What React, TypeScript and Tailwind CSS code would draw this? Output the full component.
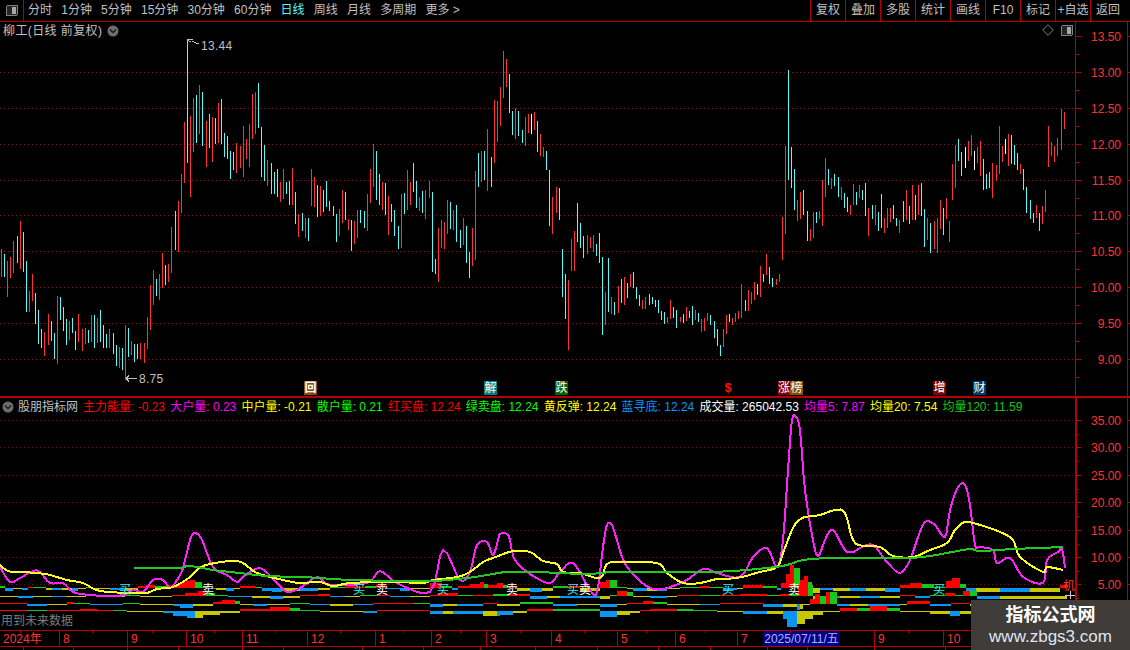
import React from "react";

const BARS = `1 249 277 r;4 254 277 c;7 261 297 r;10 257 278 r;13 241 273 r;17 236 263 c;20 221 269 r;23 232 272 c;26 261 312 c;29 291 312 r;32 274 301 r;35 293 324 c;38 310 344 c;41 329 348 c;44 332 356 r;48 314 345 r;51 321 341 c;54 333 359 c;57 296 364 r;60 297 320 c;63 307 331 c;66 319 345 c;69 321 340 r;72 318 333 c;75 331 350 c;78 314 342 r;82 329 351 r;85 328 344 r;88 330 343 c;91 315 342 r;94 315 348 c;97 318 343 r;100 310 342 c;103 325 348 c;106 334 348 c;109 329 348 r;113 333 354 c;116 345 366 c;119 347 368 r;122 348 370 c;125 325 380 r;128 328 357 c;131 341 355 r;134 344 362 c;137 344 359 c;140 343 359 r;144 343 363 r;147 317 349 r;150 285 330 r;153 270 305 r;156 279 296 c;159 274 300 r;162 253 288 r;165 265 285 c;168 264 282 r;171 227 273 r;175 211 250 c;178 201 252 r;181 174 213 r;184 122 183 r;187 39 163 c;190 116 197 r;193 98 152 r;196 95 143 c;199 85 134 r;202 92 146 c;206 121 167 r;209 114 148 c;212 117 162 r;215 118 144 c;218 103 143 r;221 99 144 c;224 133 157 c;227 136 159 c;230 151 179 c;233 152 170 c;236 143 173 r;240 146 168 r;243 126 177 r;246 139 159 r;249 124 167 r;252 94 139 r;255 92 134 r;258 83 128 c;261 127 177 c;264 145 181 c;267 160 186 r;271 163 194 c;274 172 194 c;277 169 197 c;280 182 202 r;283 169 199 r;286 182 194 c;289 181 205 c;292 168 205 r;295 192 224 c;298 214 237 r;302 213 231 c;305 218 238 r;308 218 241 c;311 169 206 r;314 177 207 r;317 185 217 c;320 186 216 r;323 190 212 c;326 181 207 c;329 201 211 c;333 206 216 c;336 214 242 c;339 209 236 r;342 190 223 r;345 192 220 c;348 219 230 r;351 220 251 c;354 221 244 r;357 210 238 r;360 210 223 c;364 211 228 c;367 194 231 r;370 169 203 r;373 144 187 r;376 151 200 c;379 174 205 c;382 182 210 r;385 183 215 c;388 196 235 r;391 204 222 c;394 210 236 c;398 226 249 c;401 194 248 r;404 193 214 c;407 170 210 r;410 182 205 r;413 163 192 c;416 181 208 c;419 197 211 r;422 191 213 c;425 190 219 r;429 181 198 r;432 192 272 c;435 259 274 c;438 228 282 r;441 220 248 r;444 222 249 r;447 200 234 r;450 202 229 c;453 210 230 r;456 205 242 c;460 230 248 c;463 218 245 r;466 226 263 c;469 252 278 c;472 228 266 r;475 171 260 r;478 153 187 c;481 151 182 r;484 151 180 c;487 129 191 r;491 157 187 c;494 100 163 r;497 101 142 r;500 87 126 r;503 51 98 r;506 59 87 r;509 74 113 c;512 111 135 c;515 108 139 r;518 111 136 c;522 130 143 c;525 117 146 r;528 114 133 r;531 114 134 w;534 112 130 r;537 121 152 c;540 134 156 r;543 147 157 r;546 151 170 c;549 170 226 c;552 197 234 r;556 187 213 r;559 188 220 c;562 249 297 c;565 274 319 c;568 280 350 r;571 239 271 r;574 231 271 r;577 203 242 c;580 223 248 c;583 236 258 c;587 235 254 r;590 237 248 r;593 235 252 r;596 244 256 c;599 233 263 c;602 257 335 c;605 292 325 r;608 258 312 c;611 297 314 r;614 302 315 c;618 286 313 r;621 279 303 c;624 277 305 r;627 283 298 c;630 274 287 r;633 272 288 c;636 287 299 c;639 295 306 c;642 300 309 r;645 297 309 r;649 294 305 c;652 297 304 c;655 300 307 c;658 300 313 c;661 311 320 c;664 312 324 c;667 317 323 r;670 300 319 r;673 307 318 c;676 310 328 c;680 317 322 r;683 314 323 c;686 307 321 r;689 311 318 c;692 306 325 c;695 310 320 r;698 313 322 c;701 319 332 r;704 318 331 r;707 313 321 r;710 315 325 c;714 321 338 c;717 329 346 c;720 345 356 c;723 329 347 r;726 315 334 r;729 314 322 c;732 318 325 r;735 313 322 r;738 311 319 r;741 284 318 r;745 300 311 c;748 290 311 r;751 292 304 r;754 282 300 r;757 284 295 c;760 266 297 r;763 274 282 c;766 254 275 r;769 267 284 c;772 278 287 c;776 279 285 r;779 274 282 r;782 217 260 r;785 146 234 r;788 70 180 c;791 147 188 c;794 169 210 c;797 200 221 r;800 192 219 r;803 190 215 c;807 211 241 c;810 229 241 r;813 212 238 r;816 212 223 c;819 211 219 r;822 180 226 r;825 158 197 r;828 169 185 c;831 178 189 r;834 174 186 c;838 177 197 c;841 187 200 r;844 193 208 c;847 197 212 c;850 205 215 r;853 184 205 r;856 192 205 c;859 185 198 r;862 190 200 c;865 183 216 c;868 208 236 r;872 205 219 c;875 205 225 r;878 212 231 c;881 194 228 c;884 218 233 r;887 208 228 r;890 208 222 r;893 205 219 c;896 218 226 c;899 220 233 r;903 201 222 c;906 190 220 r;909 206 224 c;912 185 220 r;915 195 220 c;918 185 215 r;921 183 216 c;924 209 247 c;927 218 240 r;930 223 253 c;934 221 249 r;937 218 253 r;940 200 229 r;943 208 235 c;946 198 219 r;949 221 242 r;952 164 200 r;955 145 188 r;958 139 161 c;961 152 176 c;965 147 168 w;968 141 161 r;971 135 156 r;974 151 170 w;977 147 163 r;980 141 176 r;983 159 190 c;986 174 189 c;989 172 188 c;992 163 198 r;996 165 181 r;999 126 174 r;1002 146 162 r;1005 139 154 w;1008 134 166 r;1011 135 164 c;1014 145 165 c;1017 153 170 c;1020 164 174 r;1023 169 190 c;1026 187 213 c;1030 200 219 c;1033 213 223 c;1036 205 218 r;1039 213 231 c;1042 206 224 r;1045 190 212 r;1048 126 167 r;1051 142 156 r;1054 146 162 r;1057 138 156 r;1061 109 150 r;1064 112 129 r`;

const BAR_COLORS: Record<string, string> = { r: "#ff3232", c: "#54fcfc", w: "#ffffff" };
const HIST_COLORS: Record<string, string> = { r: "#ff0000", g: "#18c818", b: "#0a96f0", y: "#c8c800" };

const MAIN_GRID = [72, 108, 144, 180, 215, 251, 287, 323, 359];
const MAIN_AXIS = [
  ["13.50", 36], ["13.00", 72], ["12.50", 108], ["12.00", 144], ["11.50", 180],
  ["11.00", 215], ["10.50", 251], ["10.00", 287], ["9.50", 323], ["9.00", 359],
] as const;
const SUB_AXIS = [
  ["35.00", 420], ["30.00", 447], ["25.00", 475], ["20.00", 502],
  ["15.00", 530], ["10.00", 557], ["5.00", 584],
] as const;

const MAGENTA = "0,567 10,582 20,578 33,571 40,572 50,583 63,583 73,592 90,595 120,596 133,590 143,592 153,580 163,580 170,588 177,580 183,568 190,540 195,533 202,540 213,567 227,575 237,582 243,577 260,568 277,583 287,592 300,588 317,577 330,585 367,583 380,571 397,583 430,592 443,550 460,580 470,572 477,545 487,542 493,555 498,540 500,534 507,534 510,540 517,563 547,583 560,572 573,563 590,590 597,592 603,547 607,525 612,525 617,540 627,567 653,589 683,582 703,569 717,573 740,577 753,557 767,548 777,567 783,540 788,470 792,420 796,417 800,430 805,490 813,540 818,556 825,540 830,531 835,532 845,550 853,552 860,548 873,545 887,562 900,573 910,560 917,540 925,522 935,525 945,537 950,510 958,487 965,485 970,505 975,545 980,547 993,550 997,563 1010,558 1023,577 1043,583 1047,560 1058,552 1062,549 1065,568";
const YELLOW = "0,565 8,571 20,572 37,573 50,575 67,580 83,583 100,591 133,593 147,593 157,589 173,587 190,577 203,566 230,561 243,563 257,573 283,580 300,583 320,582 333,586 350,583 383,582 400,582 423,583 433,580 457,577 470,572 483,562 493,558 513,551 530,552 543,561 557,564 563,572 580,573 600,578 607,564 620,562 657,563 667,573 683,583 700,583 717,579 737,578 760,572 777,567 783,553 788,540 792,530 797,522 805,517 820,515 835,510 845,513 853,540 863,546 880,547 893,556 913,557 930,550 947,543 955,530 965,522 980,525 1000,532 1013,540 1020,557 1043,572 1047,567 1063,570";
const GREEN = "134,568 177,568 190,566 213,570 240,573 267,576 300,577 320,578 350,580 400,581 433,581 467,578 487,575 507,572 533,572 560,573 587,574 613,572 640,572 700,572 733,571 767,568 787,565 803,560 830,558 863,558 907,558 930,556 947,553 970,549 980,551 1013,549 1063,547";

// catmull-rom sampling so the averages read as curves, not straight runs
const smooth = (raw: string) => {
  const p = raw.split(" ").map((s) => s.split(",").map(Number));
  const out: string[] = [];
  for (let i = 0; i < p.length - 1; i++) {
    const a = p[Math.max(i - 1, 0)];
    const b = p[i];
    const c = p[i + 1];
    const d = p[Math.min(i + 2, p.length - 1)];
    for (let k = 0; k < 4; k++) {
      const t = k / 4;
      const f = (n: number) =>
        0.5 * (2 * b[n] + (c[n] - a[n]) * t + (2 * a[n] - 5 * b[n] + 4 * c[n] - d[n]) * t * t + (3 * b[n] - a[n] - 3 * c[n] + d[n]) * t * t * t);
      out.push(f(0).toFixed(1) + "," + f(1).toFixed(1));
    }
  }
  out.push(p[p.length - 1].join(","));
  return out.join(" ");
};

// [x end, signed height, colour]
type Seg = [number, number, string];
const HIST_ROWS: { base: number; segs: Seg[] }[] = [
  {
    base: 588,
    segs: [[5,2,"g"],[13,-3,"b"],[22,-1,"y"],[28,-2,"b"],[34,1,"r"],[46,1,"g"],[52,-2,"y"],[62,-2,"b"],[72,-2,"y"],[78,-3,"b"],[86,-1,"y"],[92,1,"g"],[110,-1,"y"],[125,-2,"b"],[138,-2,"y"],[146,2,"r"],[155,3,"r"],[170,2,"g"],[178,3,"r"],[182,5,"r"],[186,6,"r"],[190,7,"r"],[195,8,"r"],[202,6,"g"],[208,1,"g"],[216,-1,"b"],[226,-2,"y"],[234,-3,"b"],[240,-1,"y"],[255,2,"r"],[262,1,"g"],[272,-3,"b"],[282,-4,"b"],[300,-3,"y"],[318,-3,"b"],[330,-2,"y"],[345,1,"g"],[355,2,"r"],[365,1,"r"],[376,2,"g"],[385,3,"r"],[400,-1,"b"],[410,-3,"b"],[430,-1,"y"],[442,5,"r"],[452,2,"g"],[458,-2,"b"],[470,2,"r"],[480,4,"r"],[484,6,"r"],[488,4,"g"],[497,3,"r"],[503,5,"r"],[508,3,"g"],[517,1,"r"],[530,-3,"y"],[542,-4,"b"],[553,-3,"y"],[568,2,"g"],[580,2,"r"],[600,-3,"y"],[606,6,"r"],[610,8,"r"],[617,8,"g"],[627,1,"g"],[633,-1,"y"],[647,-3,"b"],[657,-3,"y"],[667,-3,"b"],[680,-1,"y"],[700,1,"g"],[710,2,"r"],[723,1,"g"],[737,-2,"b"],[743,-1,"y"],[763,3,"r"],[777,2,"g"],[781,-2,"b"],[786,5,"r"],[790,14,"r"],[794,23,"r"],[800,20,"g"],[804,8,"r"],[808,12,"r"],[812,6,"g"],[820,-5,"y"],[833,-2,"b"],[850,-3,"y"],[866,-3,"b"],[885,-3,"y"],[900,-4,"b"],[910,3,"r"],[922,5,"r"],[934,4,"g"],[946,1,"g"],[952,7,"r"],[960,10,"r"],[966,4,"g"],[976,-3,"b"],[1000,-4,"y"],[1030,-4,"b"],[1060,-4,"y"],[1068,3,"r"]],
  },
  {
    base: 596,
    segs: [[18,-1,"y"],[33,-2,"b"],[52,-1,"y"],[66,-1,"b"],[86,-1,"y"],[105,1,"r"],[125,-1,"y"],[140,1,"g"],[172,-1,"y"],[185,1,"r"],[198,3,"r"],[206,5,"r"],[215,3,"g"],[228,1,"g"],[252,-1,"b"],[270,-2,"y"],[283,-3,"b"],[300,-2,"y"],[318,1,"r"],[330,2,"r"],[345,-1,"b"],[360,-1,"y"],[378,1,"g"],[390,1,"r"],[410,-1,"b"],[430,-1,"y"],[438,1,"r"],[458,3,"r"],[473,1,"g"],[493,1,"r"],[510,2,"g"],[530,2,"r"],[547,-3,"b"],[560,-2,"y"],[600,-2,"b"],[610,-3,"y"],[617,1,"g"],[627,5,"r"],[633,4,"g"],[650,-1,"y"],[667,-2,"b"],[677,-1,"y"],[700,1,"r"],[720,1,"g"],[740,1,"r"],[767,2,"r"],[780,1,"g"],[790,2,"r"],[798,2,"g"],[808,11,"r"],[813,11,"g"],[822,-4,"y"],[840,-2,"b"],[860,-2,"y"],[880,-2,"b"],[900,-2,"y"],[915,1,"r"],[930,-2,"b"],[945,1,"g"],[955,3,"r"],[963,1,"g"],[970,5,"r"],[977,5,"g"],[1000,-3,"b"],[1067,-3,"y"]],
  },
  {
    base: 604,
    segs: [[27,1,"r"],[47,-2,"b"],[67,-1,"y"],[73,2,"r"],[90,1,"g"],[123,-1,"b"],[140,1,"g"],[173,-1,"y"],[180,-2,"b"],[193,-4,"b"],[213,-2,"y"],[222,2,"r"],[235,4,"r"],[240,3,"g"],[253,-1,"y"],[267,-2,"b"],[290,-1,"y"],[310,1,"g"],[330,-1,"b"],[353,-2,"y"],[373,-1,"b"],[413,1,"r"],[430,1,"g"],[443,-3,"b"],[457,-2,"y"],[483,-2,"b"],[497,1,"r"],[520,-2,"y"],[553,2,"g"],[577,-2,"b"],[600,-1,"y"],[617,-3,"b"],[627,-1,"y"],[643,1,"r"],[653,3,"r"],[667,2,"g"],[700,-1,"y"],[720,-1,"b"],[763,1,"r"],[783,-3,"b"],[797,-3,"y"],[800,-6,"b"],[803,-5,"y"],[810,-1,"y"],[815,5,"r"],[820,10,"r"],[826,8,"g"],[830,12,"r"],[837,12,"g"],[850,-2,"b"],[868,-2,"y"],[900,-2,"b"],[907,-1,"y"],[930,3,"r"],[951,-2,"b"],[970,1,"r"],[1067,-2,"y"]],
  },
  {
    base: 611,
    segs: [[27,1,"r"],[47,1,"g"],[80,1,"r"],[97,2,"r"],[113,1,"r"],[127,1,"g"],[163,-1,"y"],[173,-2,"b"],[187,-5,"b"],[195,-7,"b"],[203,-7,"y"],[220,-4,"y"],[240,-2,"y"],[270,2,"r"],[290,4,"r"],[300,3,"g"],[320,1,"g"],[363,-1,"y"],[377,-2,"b"],[430,1,"r"],[443,-3,"b"],[453,-3,"y"],[483,-3,"b"],[497,-5,"y"],[500,-5,"b"],[513,-4,"b"],[527,-2,"y"],[553,2,"r"],[600,2,"g"],[617,-6,"b"],[630,-4,"y"],[640,-2,"y"],[650,1,"r"],[677,2,"r"],[693,2,"g"],[717,1,"g"],[743,-1,"y"],[767,-3,"b"],[783,-3,"y"],[787,-8,"b"],[797,-16,"b"],[805,-13,"y"],[813,-8,"y"],[823,-4,"y"],[840,-1,"y"],[857,3,"r"],[870,3,"g"],[887,5,"r"],[900,3,"g"],[930,-1,"y"],[950,-3,"y"],[960,-5,"b"],[972,-3,"y"],[1067,-2,"b"]],
  },
];

const TRADE_MARKS = [
  ["买", 125], ["卖", 208], ["买", 359], ["卖", 382], ["买", 443], ["卖", 512],
  ["买", 573], ["卖", 585], ["买", 728], ["卖", 794], ["买", 939],
] as const;

const STATS = [
  ["主力能量: -0.23", "text-[#ff0000]"],
  ["大户量: 0.23", "text-[#ff00ff]"],
  ["中户量: -0.21", "text-[#ffff00]"],
  ["散户量: 0.21", "text-[#00ff00]"],
  ["红买盘: 12.24", "text-[#ff0000]"],
  ["绿卖盘: 12.24", "text-[#00ff00]"],
  ["黄反弹: 12.24", "text-[#ffff00]"],
  ["蓝寻底: 12.24", "text-[#0a96ff]"],
  ["成交量: 265042.53", "text-white"],
  ["均量5: 7.87", "text-[#ff00ff]"],
  ["均量20: 7.54", "text-[#ffff00]"],
  ["均量120: 11.59", "text-[#18c818]"],
];

const PERIODS = ["分时", "1分钟", "5分钟", "15分钟", "30分钟", "60分钟", "日线", "周线", "月线", "多周期", "更多 >"];
const TOOLS = ["复权", "叠加", "多股", "统计", "画线", "F10", "标记", "+自选"];

const MONTHS = [
  ["2024年", "w-[59px]"], ["8", "w-[68px]"], ["9", "w-[59px]"], ["10", "w-[56px]"], ["11", "w-[65px]"],
  ["12", "w-[68px]"], ["1", "w-[56px]"], ["2", "w-[55px]"], ["3", "w-[65px]"], ["4", "w-[66px]"],
  ["5", "w-[58px]"], ["6", "w-[62px]"], ["7", "w-[26px]"],
];

// short marks hanging from the two rules of the time axis
const TOP_TICKS = [20, 92, 152, 214, 275, 340, 403, 460, 520, 584, 646, 705, 790, 908, 975, 1040];
const LOW_TICKS = [23, 73, 127, 178, 242, 283, 362, 423, 480, 535, 597, 658, 710, 767, 807, 874, 945];

const Candles = () => (
  <g>
    {BARS.split(";").map((row) => {
      const [x, top, bottom, c] = row.split(" ");
      return <rect key={x} x={x} y={top} width={1} height={+bottom - +top} fill={BAR_COLORS[c]} />;
    })}
  </g>
);

const Histogram = () => (
  <g>
    {HIST_ROWS.map((row) => {
      let left = 0;
      return row.segs.map(([end, h, c], i) => {
        const x = left;
        left = end;
        return (
          <rect
            key={row.base + "-" + i}
            x={x}
            y={h > 0 ? row.base - h : row.base}
            width={end - x}
            height={Math.abs(h)}
            fill={HIST_COLORS[c]}
          />
        );
      });
    })}
  </g>
);

const ChevronDot = () => (
  <svg viewBox="0 0 12 12" className="w-3 h-3">
    <circle cx="6" cy="6" r="5.5" fill="#6e6e6e" />
    <path d="M3 4.5 L6 7.5 L9 4.5" fill="none" stroke="#1a1a1a" strokeWidth="1.4" />
  </svg>
);

const PanelIcon = () => (
  <svg viewBox="0 0 12 11" className="w-3 h-[11px]" shapeRendering="crispEdges">
    <rect x="0.5" y="0.5" width="11" height="10" rx="1.5" fill="#262626" stroke="#808080" />
    <rect x="6" y="2" width="4" height="7" fill="#a8a8a8" />
  </svg>
);

const Badge = ({ text, cls }: { text: string; cls: string }) => (
  <div className={"absolute top-[359px] h-[14px] flex items-center justify-center text-white text-[12px] leading-none " + cls}>
    {text}
  </div>
);

export default function App() {
  return (
    <div className="relative w-[1130px] h-[650px] overflow-hidden bg-black flex flex-col font-['Liberation_Sans','Noto_Sans_CJK_SC',sans-serif] text-[12px] leading-none text-[#c0c0c0]">
      {/* top toolbar */}
      <div className="h-[22px] flex shrink-0 items-stretch border-b border-[#b40000]">
        <div className="w-[24px] flex items-center justify-center border-r border-[#b40000]">
          <PanelIcon />
        </div>
        <div className="flex items-center gap-[9.2px] pl-[4px] pb-[2px] whitespace-nowrap">
          {PERIODS.map((p) => (
            <span key={p} className={p === "日线" ? "text-[#54fcfc]" : ""}>
              {p}
            </span>
          ))}
        </div>
        <div className="ml-auto flex">
          {TOOLS.map((t) => (
            <div key={t} className="w-[35px] flex items-center justify-center pb-[2px] border-l border-[#b40000] whitespace-nowrap">
              {t}
            </div>
          ))}
          <div className="w-[40px] flex items-center pl-[5px] pb-[2px] border-l border-[#b40000]">返回</div>
        </div>
      </div>

      {/* price panel */}
      <div className="relative h-[374px] shrink-0">
        <svg viewBox="0 22 1130 374" className="block w-[1130px] h-[374px]" shapeRendering="crispEdges">
          {MAIN_GRID.map((y) => (
            <line key={y} x1="0" x2="1075" y1={y + 0.5} y2={y + 0.5} stroke="#901010" strokeDasharray="1 3" />
          ))}
          <Candles />
          <path d="M187.5 39 h5 M187.5 40 l3 2 M192 41 l4 2 h3" stroke="#c0c0c0" fill="none" />
          <text x="201" y="50" fill="#c0c0c0" fontSize="12" letterSpacing="0.3">13.44</text>
          <path d="M126 378.5 h11 M126 378.5 l3 -3 M126 378.5 l3 3" stroke="#c0c0c0" fill="none" />
          <text x="139" y="383" fill="#c0c0c0" fontSize="12" letterSpacing="0.3">8.75</text>
          <line x1="1075.5" x2="1075.5" y1="22" y2="396" stroke="#b40000" />
          <line x1="1127.5" x2="1127.5" y1="22" y2="396" stroke="#b40000" />
          {MAIN_AXIS.map(([label, y]) => (
            <g key={label}>
              <line x1="1076" x2="1081" y1={y + 0.5} y2={y + 0.5} stroke="#b40000" />
              <line x1="1076" x2="1079" y1={y + 18.5} y2={y + 18.5} stroke="#b40000" />
              <line x1="1128" x2="1130" y1={y + 0.5} y2={y + 0.5} stroke="#b40000" />
              <text x="1121" y={y + 5} textAnchor="end" fill="#ff3232" fontSize="12" shapeRendering="auto">{label}</text>
            </g>
          ))}
        </svg>
        <div className="absolute left-[3px] top-[2px] h-[14px] flex items-center gap-[5px] whitespace-nowrap">
          <span className="text-[12px] tracking-[0.4px]">柳工(日线 前复权)</span>
          <ChevronDot />
        </div>
        <div className="absolute left-[1042px] top-[2px] flex items-center gap-[7px]">
          <svg viewBox="0 0 12 12" className="w-3 h-3">
            <path d="M6 0.7 L11.3 6 L6 11.3 L0.7 6 Z" fill="none" stroke="#808080" />
          </svg>
          <PanelIcon />
        </div>
        <Badge text="回" cls="left-[304px] w-[13px] bg-[#8a4a10] font-bold" />
        <Badge text="解" cls="left-[484px] w-[13px] bg-[#007f7f]" />
        <Badge text="跌" cls="left-[555px] w-[13px] bg-[#006400]" />
        <Badge text="$" cls="left-[725px] w-[6px] font-bold !text-[#ff1010]" />
        <Badge text="涨" cls="left-[778px] w-[12px] bg-[#800000]" />
        <Badge text="榜" cls="left-[790px] w-[13px] bg-[#8a5000]" />
        <Badge text="增" cls="left-[933px] w-[13px] bg-[#800000]" />
        <Badge text="财" cls="left-[973px] w-[13px] bg-[#003c6e]" />
      </div>

      {/* indicator panel */}
      <div className="relative h-[234px] shrink-0 border-t-2 border-[#b40000]">
        <svg viewBox="0 398 1130 232" className="block w-[1130px] h-[232px]" shapeRendering="crispEdges">
          {SUB_AXIS.map(([label, y]) => (
            <line key={label} x1="0" x2="1075" y1={y + 0.5} y2={y + 0.5} stroke="#6a1010" strokeDasharray="1 3" />
          ))}
          <Histogram />
          <polyline points={smooth(MAGENTA)} fill="none" stroke="#ff20ff" strokeWidth="2" />
          <polyline points={smooth(YELLOW)} fill="none" stroke="#ffff20" strokeWidth="2" />
          <polyline points={smooth(GREEN)} fill="none" stroke="#20c820" strokeWidth="2" />
          {TRADE_MARKS.map(([t, x]) => (
            <text key={x} x={x} y="594" textAnchor="middle" fontSize="12" fill={t === "买" ? "#30f0f0" : "#ffffff"} shapeRendering="auto">
              {t}
            </text>
          ))}
          <text x="1069" y="590" textAnchor="middle" fontSize="12" fill="#ff3232" shapeRendering="auto">机</text>
          <path d="M1065 595.5 h10 M1070.5 591 v8" stroke="#e0c0e0" />
          <line x1="1075.5" x2="1075.5" y1="398" y2="630" stroke="#b40000" strokeWidth="2" />
          <line x1="1127.5" x2="1127.5" y1="398" y2="630" stroke="#b40000" />
          {SUB_AXIS.map(([label, y]) => (
            <g key={label}>
              <line x1="1076" x2="1081" y1={y + 0.5} y2={y + 0.5} stroke="#b40000" />
              <line x1="1076" x2="1079" y1={y + 14.5} y2={y + 14.5} stroke="#b40000" />
              <line x1="1128" x2="1130" y1={y + 0.5} y2={y + 0.5} stroke="#b40000" />
              <text x="1121" y={y + 5} textAnchor="end" fill="#ff3232" fontSize="12" shapeRendering="auto">{label}</text>
            </g>
          ))}
        </svg>
        <div className="absolute left-[2px] top-[2px] h-[14px] flex items-center gap-[4px] whitespace-nowrap">
          <ChevronDot />
          <span className="mr-[1px] text-[#c0c0c0]">股朋指标网</span>
          <div className="flex gap-[5.2px]">
            {STATS.map(([text, cls]) => (
              <span key={text} className={cls}>
                {text}
              </span>
            ))}
          </div>
        </div>
        <div className="absolute left-[1px] top-[217px] text-[#7c7c7c]">用到未来数据</div>
      </div>

      {/* time axis */}
      <div className="relative h-[20px] shrink-0">
        <div className="h-[17px] flex border-y border-[#b40000] text-[#ff3232] whitespace-nowrap">
          {MONTHS.map(([label, w]) => (
            <div key={label} className={"pl-[3px] pt-[1px] flex items-center border-l border-[#b40000] first:border-l-0 " + w}>
              {label}
            </div>
          ))}
          <div className="w-[77px] flex items-center justify-center bg-[#000088] text-[#b0b0ff]">2025/07/11/五</div>
          <div className="w-[34px]" />
          <div className="w-[69px] pl-[3px] pt-[1px] flex items-center border-l border-[#b40000]">9</div>
          <div className="w-[28px] pl-[3px] pt-[1px] flex items-center border-l border-[#b40000]">10</div>
        </div>
        <svg viewBox="0 0 1075 20" className="absolute left-0 top-0 w-[1075px] h-[20px]" shapeRendering="crispEdges">
          {TOP_TICKS.map((x) => (
            <line key={x} x1={x + 0.5} x2={x + 0.5} y1="1" y2="3" stroke="#b40000" />
          ))}
          {LOW_TICKS.map((x) => (
            <line key={x} x1={x + 0.5} x2={x + 0.5} y1="17" y2="20" stroke="#b40000" />
          ))}
        </svg>
      </div>

      {/* watermark */}
      <div className="absolute right-0 bottom-0 w-[159px] h-[50px] flex flex-col items-center justify-center gap-[4px] bg-[#403c3a]">
        <span className="text-[18px] font-bold text-white">指标公式网</span>
        <span className="text-[17px] text-[#dce6f2]">www.zbgs3.com</span>
      </div>
    </div>
  );
}
